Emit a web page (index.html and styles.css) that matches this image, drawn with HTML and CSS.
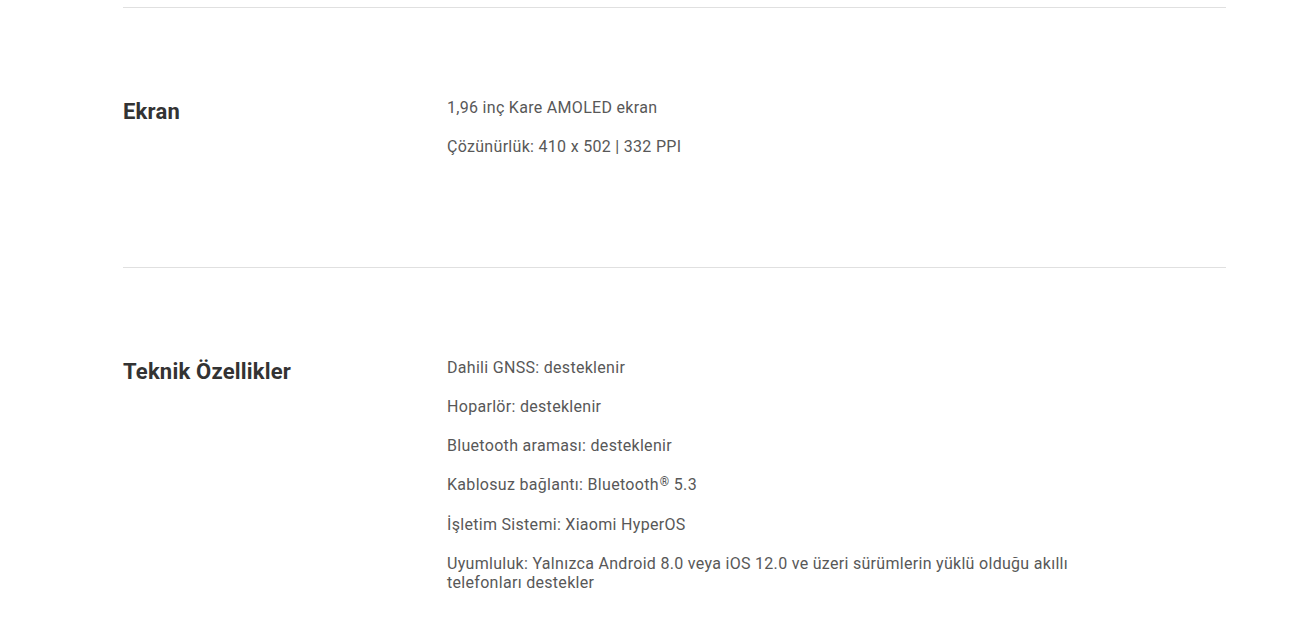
FILE: index.html
```html
<!DOCTYPE html>
<html lang="tr">
<head>
<meta charset="utf-8">
<title>Özellikler</title>
<link rel="stylesheet" href="styles.css">
</head>
<body>
<main class="specs">
  <section class="spec">
    <h2 class="spec-title">Ekran</h2>
    <ul class="spec-list">
      <li>1,96 inç Kare AMOLED ekran</li>
      <li>Çözünürlük: 410 x 502 | 332 PPI</li>
    </ul>
  </section>
  <section class="spec">
    <h2 class="spec-title">Teknik Özellikler</h2>
    <ul class="spec-list">
      <li>Dahili GNSS: desteklenir</li>
      <li>Hoparlör: desteklenir</li>
      <li>Bluetooth araması: desteklenir</li>
      <li>Kablosuz bağlantı: Bluetooth<sup>®</sup> 5.3</li>
      <li class="shift">İşletim Sistemi: Xiaomi HyperOS</li>
      <li>Uyumluluk: Yalnızca Android 8.0 veya iOS 12.0 ve üzeri sürümlerin yüklü olduğu akıllı telefonları destekler</li>
    </ul>
  </section>
</main>
</body>
</html>
```

FILE: styles.css
```css
html, body {
  margin: 0;
  padding: 0;
  background: #fff;
}
body {
  font-family: Roboto, "Liberation Sans", sans-serif;
  color: #585858;
}
.specs {
  margin: 7px 0 0 123px;
  width: 1103px;
}
.spec {
  display: grid;
  grid-template-columns: 324px 1fr;
  border-top: 1px solid #e0e0e0;
  padding: 90px 0 91px;
}
.spec-title {
  margin: 0;
  font-size: 22px;
  line-height: 28px;
  font-weight: 700;
  letter-spacing: 0.2px;
  color: #333;
}
.spec-list {
  list-style: none;
  margin: 0;
  padding: 0;
  max-width: 640px;
}
.spec-list li {
  font-size: 16px;
  line-height: 19px;
  letter-spacing: 0.3px;
  margin-bottom: 20px;
}
.spec-list li.shift {
  padding-top: 1px;
}
.spec-list sup {
  font-size: 12px;
  font-weight: 700;
  line-height: 0;
  vertical-align: 4px;
  margin-left: 1px;
}
```
